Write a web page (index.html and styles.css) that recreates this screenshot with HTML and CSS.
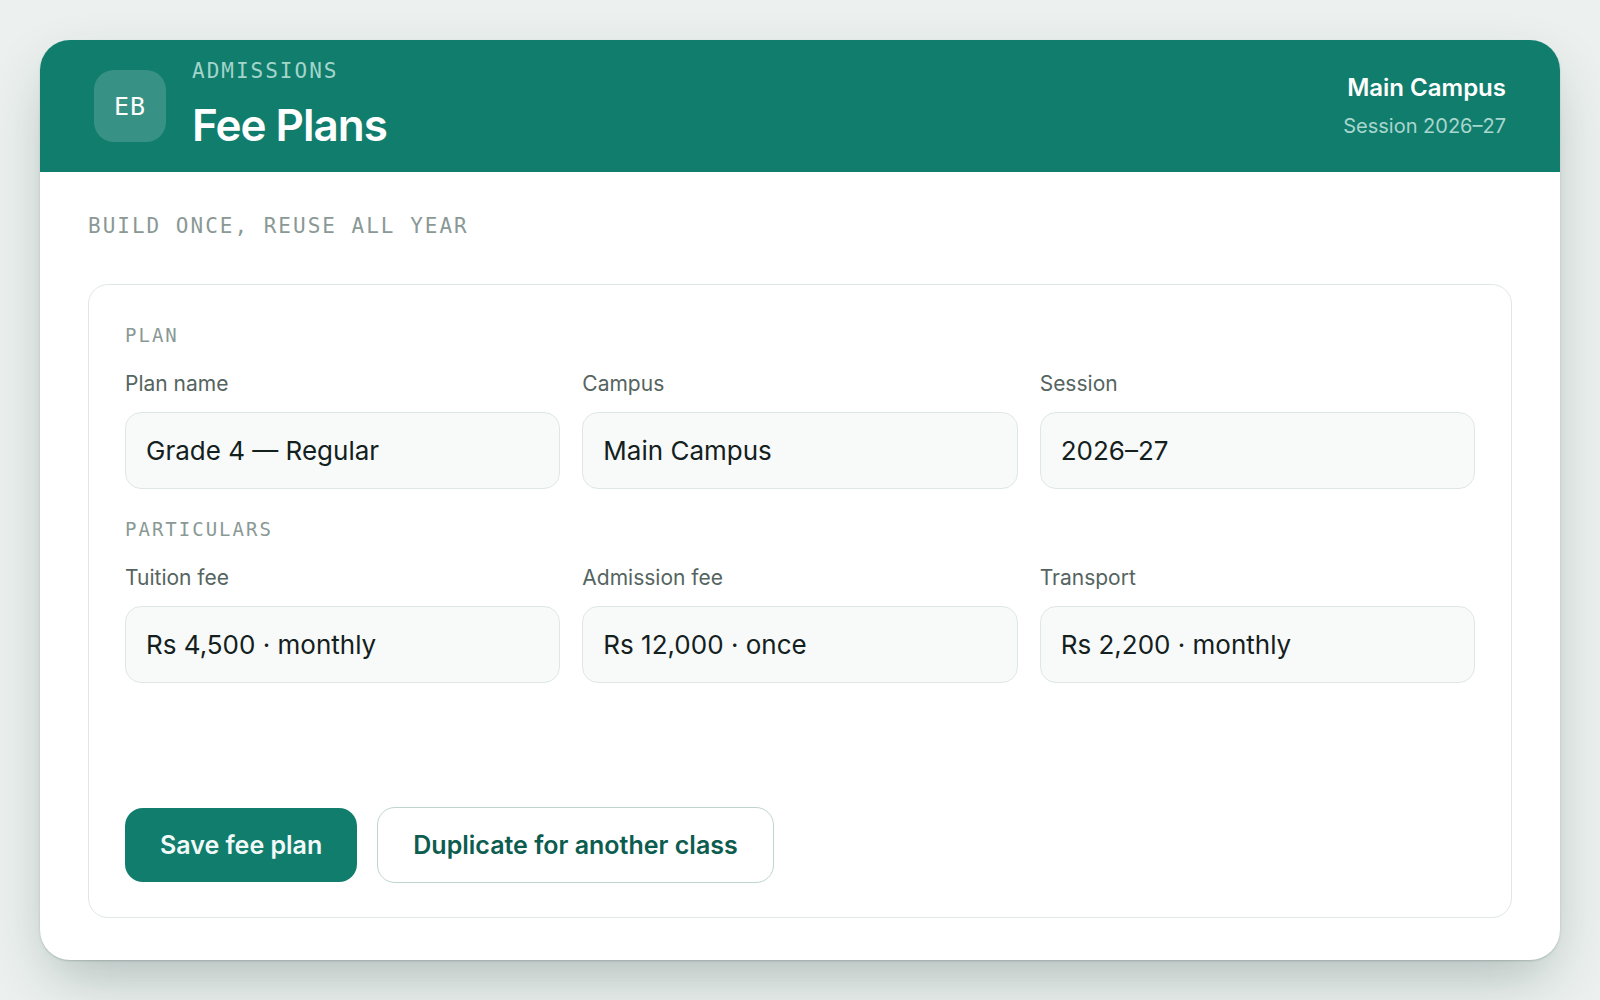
FILE: index.html
```html
<!DOCTYPE html>
<html lang="en">
<head>
    <meta charset="UTF-8">
    <meta name="viewport" content="width=device-width, initial-scale=1.0">
    <title>Fee Plans</title>
    <link rel="stylesheet" href="styles.css">
</head>
<body>
    <main class="card">
        <header class="header">
            <div class="logo">EB</div>
            <div class="heading">
                <p class="section-name">Admissions</p>
                <h1>Fee Plans</h1>
            </div>
            <div class="campus">
                <p class="campus-name">Main Campus</p>
                <p class="campus-session">Session 2026–27</p>
            </div>
        </header>

        <div class="content">
            <p class="tagline">Build once, reuse all year</p>

            <form class="panel">
                <h2>Plan</h2>
                <div class="fields">
                    <div class="field">
                        <label for="planName">Plan name</label>
                        <input type="text" id="planName" value="Grade 4 — Regular">
                    </div>
                    <div class="field">
                        <label for="campus">Campus</label>
                        <input type="text" id="campus" value="Main Campus">
                    </div>
                    <div class="field">
                        <label for="session">Session</label>
                        <input type="text" id="session" value="2026–27">
                    </div>
                </div>

                <h2>Particulars</h2>
                <div class="fields">
                    <div class="field">
                        <label for="tuition">Tuition fee</label>
                        <input type="text" id="tuition" value="Rs 4,500 · monthly">
                    </div>
                    <div class="field">
                        <label for="admission">Admission fee</label>
                        <input type="text" id="admission" value="Rs 12,000 · once">
                    </div>
                    <div class="field">
                        <label for="transport">Transport</label>
                        <input type="text" id="transport" value="Rs 2,200 · monthly">
                    </div>
                </div>

                <div class="actions">
                    <button type="button" class="btn btn-primary">Save fee plan</button>
                    <button type="button" class="btn btn-outline">Duplicate for another class</button>
                </div>
            </form>
        </div>
    </main>
</body>
</html>
```
FILE: styles.css
```css
* { box-sizing: border-box; margin: 0; padding: 0; }

body {
    display: flex;
    min-height: 100vh;
    padding: 40px;
    background: #ecf1ef;
    color: #14201d;
    font-family: Inter, "Liberation Sans", sans-serif;
}

.card {
    flex: 1;
    display: flex;
    flex-direction: column;
    border-radius: 30px;
    background: #fff;
    box-shadow: 0 1px 2px rgba(15, 50, 42, 0.2), 0 24px 60px -12px rgba(15, 50, 42, 0.3);
    overflow: hidden;
}

/* header */
.header {
    display: flex;
    align-items: center;
    gap: 26px;
    height: 132px;
    padding: 0 54px;
    background: #117d6d;
    color: #fff;
}
.logo {
    display: flex;
    align-items: center;
    justify-content: center;
    width: 72px;
    height: 72px;
    border-radius: 20px;
    background: rgba(255, 255, 255, 0.16);
    font: 500 25px "DejaVu Sans Mono", monospace;
    letter-spacing: 1px;
}
.heading { flex: 1; }
.section-name, .tagline, h2 {
    font-family: "DejaVu Sans Mono", monospace;
    font-weight: 400;
    letter-spacing: 2px;
    text-transform: uppercase;
}
.section-name { color: #a3d5cb; font-size: 21px; line-height: 28px; }
h1 { margin-top: 10px; font-size: 44px; font-weight: 600; line-height: 60px; letter-spacing: -1px; }
.campus { text-align: right; }
.campus-name { font-size: 24px; font-weight: 600; line-height: 36px; }
.campus-session { margin-top: 4px; color: #a9d6ce; font-size: 20px; line-height: 32px; }

/* body */
.content {
    flex: 1;
    display: flex;
    flex-direction: column;
    padding: 40px 48px 42px;
}
.tagline { margin-bottom: 44px; color: #8a9995; font-size: 21px; line-height: 28px; }
.panel {
    flex: 1;
    display: flex;
    flex-direction: column;
    padding: 36px 36px 34px;
    border: 1px solid #dfe7e5;
    border-radius: 20px;
}
h2 { color: #8a9995; font-size: 19px; line-height: 28px; }
.fields {
    display: grid;
    grid-template-columns: repeat(3, 1fr);
    gap: 22px;
    margin: 20px 0 26px;
}
label { display: block; margin-bottom: 13px; color: #55645f; font-size: 21px; line-height: 30px; }
input {
    display: block;
    width: 100%;
    height: 77px;
    padding: 0 20px;
    border: 1px solid #dfe7e5;
    border-radius: 16px;
    background: #f7faf9;
    color: #14201d;
    font-family: inherit;
    font-size: 26px;
}

.actions {
    display: flex;
    align-items: center;
    gap: 20px;
    margin-top: auto;
}
.btn {
    height: 74px;
    padding: 0 35px;
    border: none;
    border-radius: 18px;
    font-family: inherit;
    font-size: 25px;
    font-weight: 600;
    cursor: pointer;
}
.btn-primary { background: #117d6d; color: #f1faf8; }
.btn-outline { height: 76px; border: 1px solid #bed5cf; background: #fff; color: #0c5c4f; }
```
